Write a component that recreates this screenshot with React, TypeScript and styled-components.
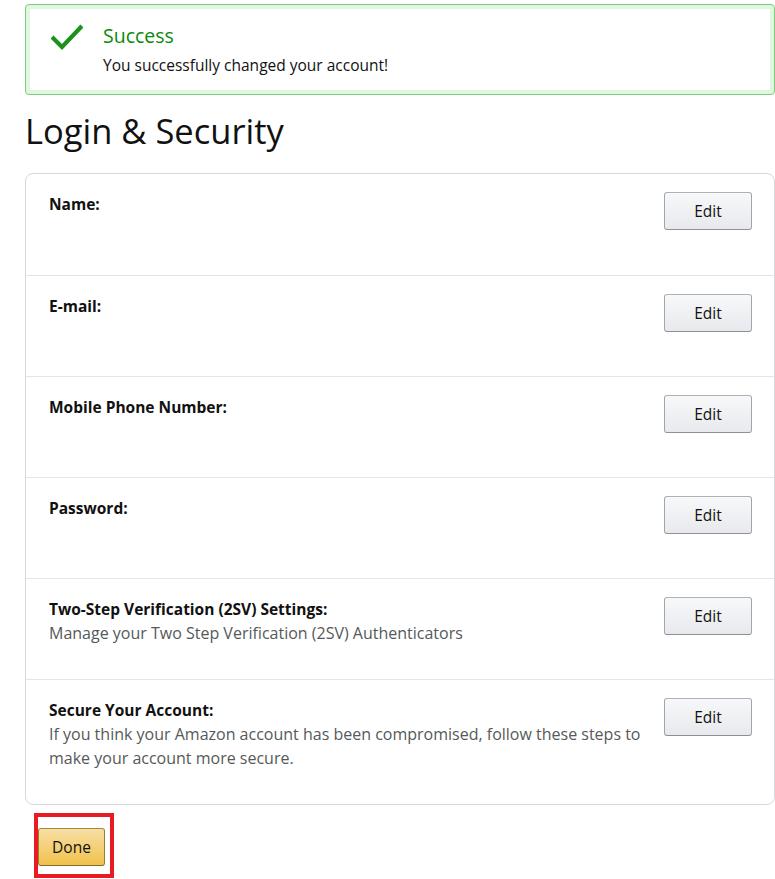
import React from "react";
import styled, { createGlobalStyle } from "styled-components";

const Global = createGlobalStyle`
  html, body { margin: 0; padding: 0; background: #fff; }
  body { font-family: "Open Sans", "Noto Sans", Arial, sans-serif; color: #111; }
  * { box-sizing: border-box; }
`;

const Page = styled.div`
  padding: 4px 0 0 25px;
  width: 775px;
`;

const Alert = styled.div`
  width: 750px;
  height: 91px;
  border: 1px solid #7fca7f;
  border-radius: 4px;
  box-shadow: inset 0 0 0 4px #dff7df;
  display: flex;
  align-items: flex-start;
  padding: 17px 20px 0 25px;
  gap: 20px;
`;

const CheckIcon = styled.svg`
  width: 32px;
  height: 28px;
  flex: none;
  margin-top: 2px;
`;

const AlertBody = styled.div`
  display: flex;
  flex-direction: column;
`;

const AlertTitle = styled.div`
  font-size: 19.5px;
  line-height: 28px;
  color: #0b8a0b;
`;

const AlertText = styled.div`
  font-size: 15.5px;
  line-height: 22px;
  color: #111;
  margin-top: 4px;
`;

const Heading = styled.h1`
  margin: 14px 0 0;
  font-size: 34.5px;
  font-weight: 400;
  line-height: 44px;
  color: #111;
  height: 64px;
`;

const Card = styled.div`
  width: 750px;
  border: 1px solid #d5d9d9;
  border-radius: 8px;
  overflow: hidden;
`;

const Row = styled.div`
  display: flex;
  justify-content: space-between;
  align-items: flex-start;
  min-height: 101px;
  padding: 18px 22px 34px 23px;
  & + & { border-top: 1px solid #e3e6e6; }
`;

const RowText = styled.div`
  display: flex;
  flex-direction: column;
  max-width: 600px;
`;

const Label = styled.div`
  font-size: 15.5px;
  line-height: 24px;
  font-weight: 700;
  color: #111;
`;

const Detail = styled.div`
  font-size: 16px;
  line-height: 24px;
  color: #565959;
`;

const EditButton = styled.button`
  flex: none;
  width: 88px;
  height: 38px;
  border: 1px solid #adb1b8;
  border-color: #adb1b8 #a2a6ac #8d9096;
  border-radius: 3px;
  background: linear-gradient(to bottom, #f7f8fa, #e7e9ec);
  font-family: inherit;
  font-size: 15.5px;
  color: #111;
  cursor: pointer;
`;

const DoneFrame = styled.div`
  margin: 8px 0 0 9px;
  width: 80px;
  height: 65px;
  border: 4px solid #e81a22;
  display: flex;
  align-items: center;
  justify-content: flex-start;
  padding: 2px 0 0 0;
`;

const DoneButton = styled.button`
  width: 67px;
  height: 38px;
  border: 1px solid #a88734;
  border-color: #a88734 #9c7e31 #846a29;
  border-radius: 3px;
  background: linear-gradient(to bottom, #f7dfa5, #f0c14b);
  font-family: inherit;
  font-size: 15.5px;
  color: #111;
  cursor: pointer;
`;

const rows = [
  { label: "Name:" },
  { label: "E-mail:" },
  { label: "Mobile Phone Number:" },
  { label: "Password:" },
  {
    label: "Two-Step Verification (2SV) Settings:",
    detail: "Manage your Two Step Verification (2SV) Authenticators",
  },
  {
    label: "Secure Your Account:",
    detail:
      "If you think your Amazon account has been compromised, follow these steps to make your account more secure.",
  },
];

export default function App() {
  return (
    <>
      <Global />
      <Page>
        <Alert>
          <CheckIcon viewBox="0 0 32 28">
            <path
              d="M2.5 14.5 L11 23 L29.5 3.5"
              fill="none"
              stroke="#1c911c"
              strokeWidth="4.2"
              strokeLinecap="square"
            />
          </CheckIcon>
          <AlertBody>
            <AlertTitle>Success</AlertTitle>
            <AlertText>You successfully changed your account!</AlertText>
          </AlertBody>
        </Alert>
        <Heading>Login &amp; Security</Heading>
        <Card>
          {rows.map((r) => (
            <Row key={r.label}>
              <RowText>
                <Label>{r.label}</Label>
                {r.detail && <Detail>{r.detail}</Detail>}
              </RowText>
              <EditButton>Edit</EditButton>
            </Row>
          ))}
        </Card>
        <DoneFrame>
          <DoneButton>Done</DoneButton>
        </DoneFrame>
      </Page>
    </>
  );
}
